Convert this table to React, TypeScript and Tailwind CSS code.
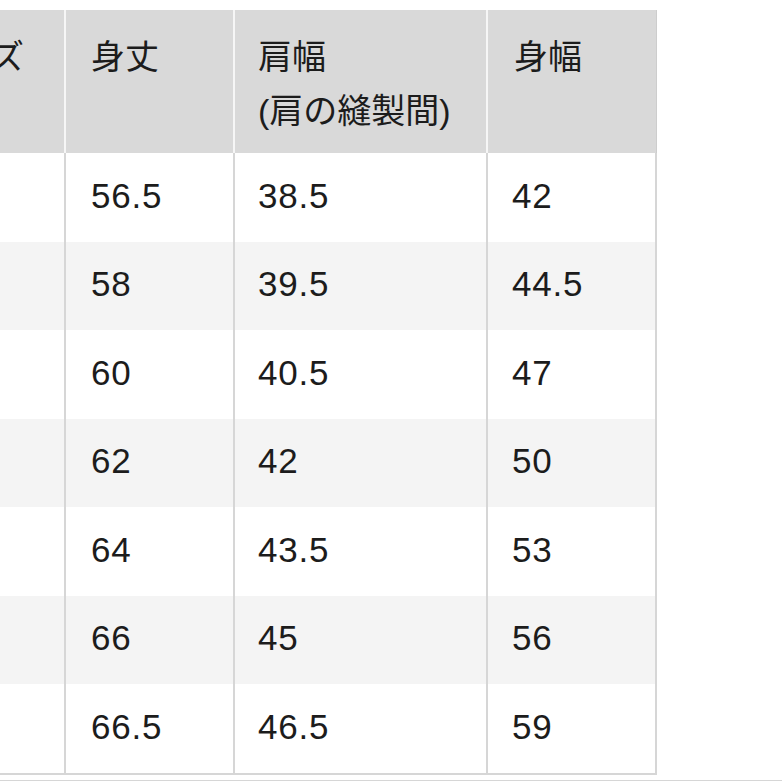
import React from "react";

const rows = [
  ["56.5", "38.5", "42"],
  ["58", "39.5", "44.5"],
  ["60", "40.5", "47"],
  ["62", "42", "50"],
  ["64", "43.5", "53"],
  ["66", "45", "56"],
  ["66.5", "46.5", "59"],
];

export default function App() {
  return (
    <div
      className="w-[782px] h-[782px] bg-white overflow-hidden text-[#1c1c1c]"
      style={{ fontFamily: "'Liberation Sans', 'Noto Sans CJK JP', sans-serif" }}
    >
      <div className="pt-[10px] ml-[-106px] w-[763px]">
        {/* header */}
        <div className="flex h-[143px] text-[34px] leading-[54px]">
          <div className="w-[172px] shrink-0 bg-[#d9d9d9] border-r-2 border-[#f6f6f6] pl-[29px] pt-[20px] whitespace-nowrap">
            サイズ
          </div>
          <div className="w-[169px] shrink-0 bg-[#d9d9d9] border-r-2 border-[#f6f6f6] pl-[25px] pt-[20px]">
            身丈
          </div>
          <div className="w-[253px] shrink-0 bg-[#d9d9d9] border-r-2 border-[#f6f6f6] pl-[23px] pt-[20px]">
            <div>肩幅</div>
            <div>(肩の縫製間)</div>
          </div>
          <div className="w-[169px] shrink-0 bg-[#d9d9d9] border-r border-[#cdcdcd] pl-[26px] pt-[20px]">
            身幅
          </div>
        </div>
        {/* body */}
        <div className="border-b-2 border-[#d6d6d6]">
          {rows.map((r, i) => (
            <div
              key={i}
              className={`flex h-[88.5px] text-[35px] tracking-[0.8px] ${i % 2 === 1 ? "bg-[#f4f4f4]" : "bg-white"}`}
            >
              <div className="w-[172px] shrink-0 border-r-2 border-[#d6d6d6]" />
              <div className="w-[169px] shrink-0 border-r-2 border-[#d6d6d6] pl-[25px] pb-[3px] flex items-center">
                {r[0]}
              </div>
              <div className="w-[253px] shrink-0 border-r-2 border-[#d6d6d6] pl-[23px] pb-[3px] flex items-center">
                {r[1]}
              </div>
              <div className="w-[169px] shrink-0 border-r-2 border-[#d6d6d6] pl-[24px] pb-[3px] flex items-center">
                {r[2]}
              </div>
            </div>
          ))}
        </div>
      </div>
      <div className="mt-[5px] h-px w-full bg-[#d6d6d6]" />
    </div>
  );
}
